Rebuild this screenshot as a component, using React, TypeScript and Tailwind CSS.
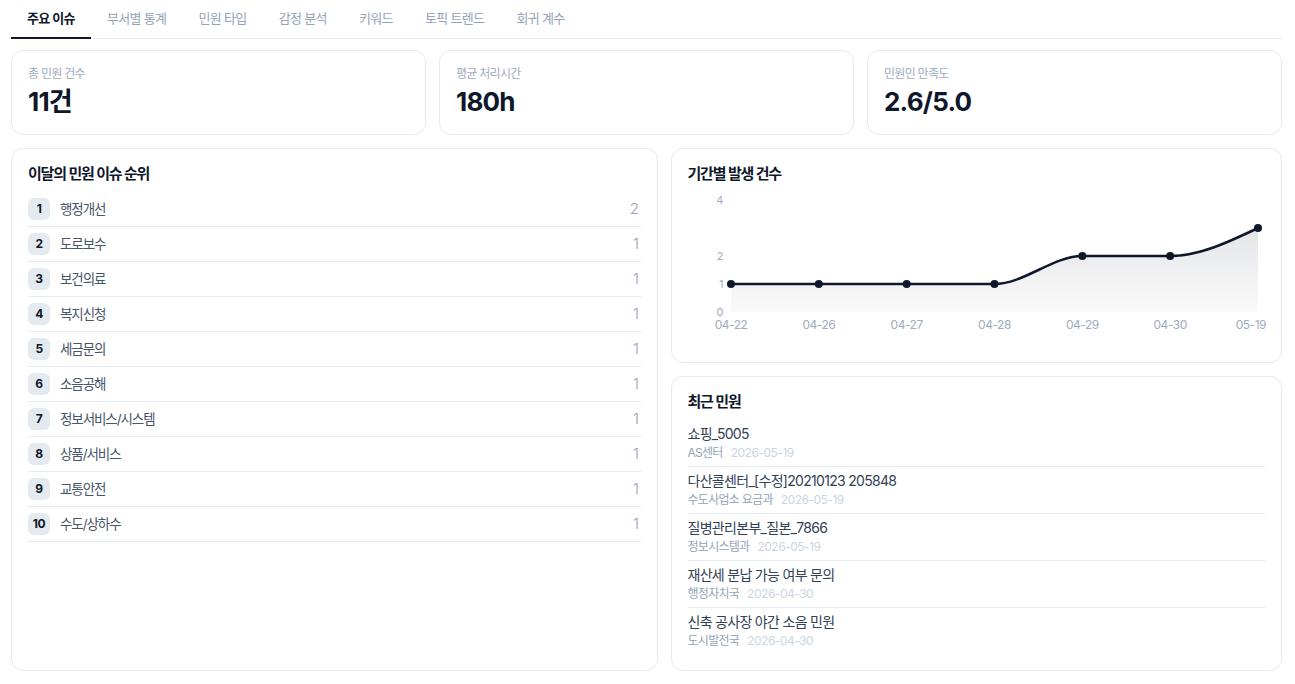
const tabs = ['주요 이슈', '부서별 통계', '민원 타입', '감정 분석', '키워드', '토픽 트렌드', '회귀 계수']

const stats = [
  { label: '총 민원 건수', value: '11건' },
  { label: '평균 처리시간', value: '180h' },
  { label: '민원인 만족도', value: '2.6/5.0' },
]

const ranking = [
  { name: '행정개선', count: 2 },
  { name: '도로보수', count: 1 },
  { name: '보건의료', count: 1 },
  { name: '복지신청', count: 1 },
  { name: '세금문의', count: 1 },
  { name: '소음공해', count: 1 },
  { name: '정보서비스/시스템', count: 1 },
  { name: '상품/서비스', count: 1 },
  { name: '교통안전', count: 1 },
  { name: '수도/상하수', count: 1 },
]

const recent = [
  { title: '쇼핑_5005', dept: 'AS센터', date: '2026-05-19' },
  { title: '다산콜센터_[수정]20210123 205848', dept: '수도사업소 요금과', date: '2026-05-19' },
  { title: '질병관리본부_질본_7866', dept: '정보시스템과', date: '2026-05-19' },
  { title: '재산세 분납 가능 여부 문의', dept: '행정자치국', date: '2026-04-30' },
  { title: '신축 공사장 야간 소음 민원', dept: '도시발전국', date: '2026-04-30' },
]

const series = [
  { d: '04-22', v: 1 },
  { d: '04-26', v: 1 },
  { d: '04-27', v: 1 },
  { d: '04-28', v: 1 },
  { d: '04-29', v: 2 },
  { d: '04-30', v: 2 },
  { d: '05-19', v: 3 },
]

function TrendChart() {
  const x0 = 43
  const step = 527 / 6
  const y = (v: number) => 124 - 28 * v
  const pts = series.map((p, i) => ({ x: x0 + step * i, y: y(p.v), d: p.d }))

  // monotone-style curve: flat tangents at plateaus, last segment ends on the slope
  let line = `M${pts[0].x},${pts[0].y}`
  for (let i = 1; i < pts.length; i++) {
    const a = pts[i - 1]
    const b = pts[i]
    const h = b.x - a.x
    const last = i === pts.length - 1
    const c2y = last ? b.y + (a.y - b.y) / 2 : b.y
    line += ` C${a.x + h / 3},${a.y} ${b.x - h / 3},${c2y} ${b.x},${b.y}`
  }
  const area = `${line} L${pts[pts.length - 1].x},124 L${pts[0].x},124 Z`

  return (
    <svg width={578} height={158} className="mt-1 block overflow-visible">
      <defs>
        <linearGradient id="fillGrad" x1="0" y1="0" x2="0" y2="1">
          <stop offset="0%" stopColor="#0f172a" stopOpacity="0.11" />
          <stop offset="100%" stopColor="#0f172a" stopOpacity="0.02" />
        </linearGradient>
      </defs>
      {[0, 1, 2, 4].map((t) => (
        <text key={t} x={35} y={y(t) + 4} textAnchor="end" fontSize="11" fill="#a0abbd">
          {t}
        </text>
      ))}
      <path d={area} fill="url(#fillGrad)" />
      <path d={line} fill="none" stroke="#0f172a" strokeWidth="2.5" />
      {pts.map((p) => (
        <circle key={p.d} cx={p.x} cy={p.y} r="4" fill="#0f172a" />
      ))}
      {pts.map((p, i) => {
        const last = i === pts.length - 1
        return (
          <text
            key={p.d + 'l'}
            x={last ? 578 : p.x}
            y={141}
            textAnchor={last ? 'end' : 'middle'}
            fontSize="12"
            fill="#a0abbd"
          >
            {p.d}
          </text>
        )
      })}
    </svg>
  )
}

export default function App() {
  return (
    <div
      className="min-h-screen bg-white pl-[11px] pr-[13px] pb-[14px] text-[#0f172a] tracking-[-0.03em]"
      style={{ fontFamily: 'Inter, "Noto Sans CJK KR", sans-serif' }}
    >
      <div className="flex h-[39px] border-b border-[#e5e9f0]">
        {tabs.map((t, i) => (
          <div
            key={t}
            className={
              i === 0
                ? 'flex items-center px-4 text-[13px] font-semibold tracking-[-0.05em] text-[#0f172a] border-b-2 border-[#0f172a] -mb-px'
                : 'flex items-center px-4 text-[13px] tracking-[-0.05em] text-[#94a3b8]'
            }
          >
            {t}
          </div>
        ))}
      </div>

      <div className="mt-[11px] grid grid-cols-3 gap-[13px]">
        {stats.map((s) => (
          <div key={s.label} className="h-[85px] rounded-xl border border-[#e5e9f0] px-4 pt-[15px]">
            <div className="text-[12px] leading-4 tracking-[-0.06em] text-[#a0abbd]">{s.label}</div>
            <div className="mt-[4px] text-[26px] font-bold leading-8 tracking-[-0.03em] text-[#0f172a]">{s.value}</div>
          </div>
        ))}
      </div>

      <div className="mt-[13px] grid grid-cols-[minmax(0,646fr)_minmax(0,611fr)] gap-[13px]">
        <div className="h-[523px] rounded-xl border border-[#e5e9f0] px-4 pt-[15px]">
          <div className="text-[15px] font-semibold leading-5 tracking-[-0.08em] text-[#0f172a]">이달의 민원 이슈 순위</div>
          <div className="mt-2">
            {ranking.map((r, i) => (
              <div key={r.name} className="flex h-[35px] items-center border-b border-[#e5e9f0]">
                <div className="flex h-[22px] w-[22px] items-center justify-center rounded-md bg-[#e5e9f0] text-[12px] font-bold tracking-[-0.04em] text-[#0f172a]">
                  {i + 1}
                </div>
                <div className="ml-[10px] flex-1 text-[13.5px] tracking-[-0.08em] text-[#475569]">{r.name}</div>
                <div className="pr-[2px] text-[15px] font-light text-[#94a3b8]">{r.count}</div>
              </div>
            ))}
          </div>
        </div>

        <div className="flex flex-col gap-[13px]">
          <div className="h-[215px] rounded-xl border border-[#e5e9f0] px-4 pt-[15px]">
            <div className="text-[15px] font-semibold leading-5 tracking-[-0.08em] text-[#0f172a]">기간별 발생 건수</div>
            <TrendChart />
          </div>

          <div className="flex-1 rounded-xl border border-[#e5e9f0] px-4 pt-[15px]">
            <div className="text-[15px] font-semibold leading-5 tracking-[-0.08em] text-[#0f172a]">최근 민원</div>
            <div className="mt-[8px]">
              {recent.map((r, i) => (
                <div
                  key={r.title}
                  className={i < recent.length - 1 ? 'border-b border-[#e5e9f0] pt-[4px] pb-[5px]' : 'pt-[4px] pb-[5px]'}
                >
                  <div className="text-[14px] leading-5 tracking-[-0.05em] text-[#334155]">{r.title}</div>
                  <div className="mt-[1px] flex gap-2 text-[12px] leading-4">
                    <span className="tracking-[-0.06em] text-[#94a3b8]">{r.dept}</span>
                    <span className="text-[#cbd5e1]">{r.date}</span>
                  </div>
                </div>
              ))}
            </div>
          </div>
        </div>
      </div>
    </div>
  )
}
